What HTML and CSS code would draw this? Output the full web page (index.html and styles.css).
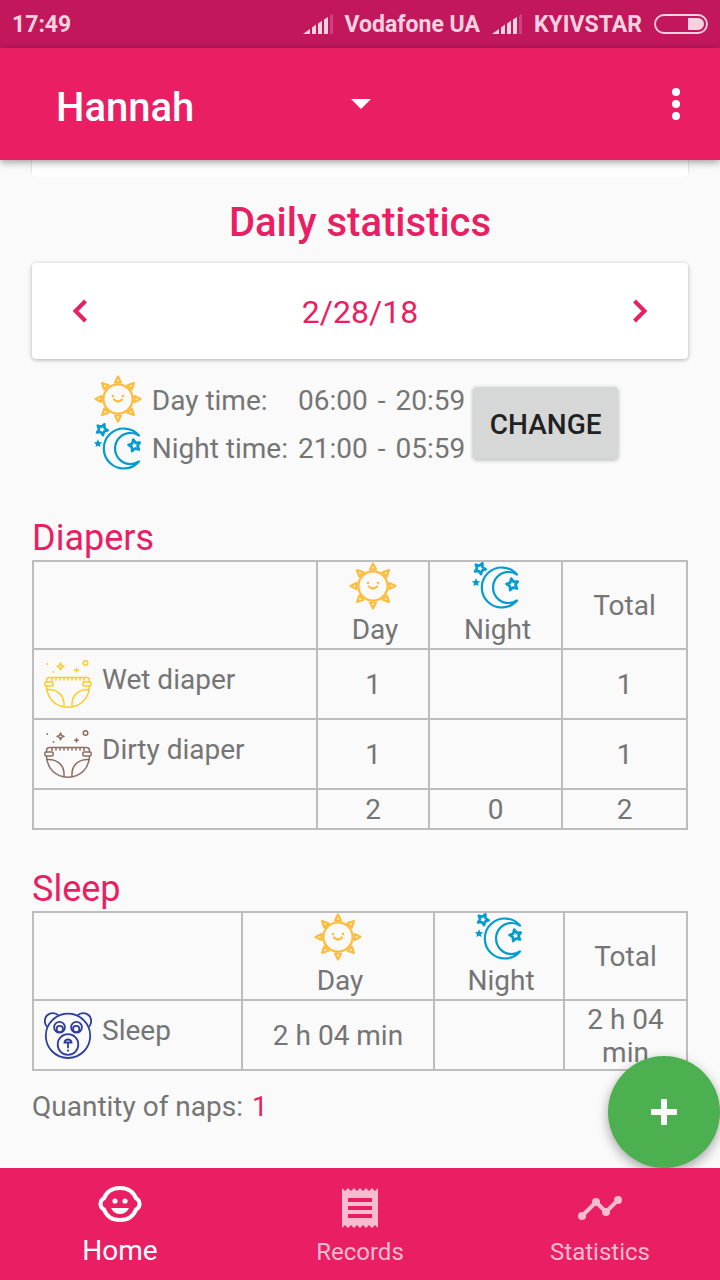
FILE: index.html
```html
<!DOCTYPE html>
<html lang="en">
<head>
<meta charset="utf-8">
<meta name="viewport" content="width=device-width, initial-scale=1">
<title>Daily statistics</title>
<link rel="stylesheet" href="styles.css">
</head>
<body>
<svg class="sprite" aria-hidden="true">
  <defs>
    <path id="ray" d="M24 1.5 L27 7.5 H21 Z"/>
    <path id="star" d="M0 -5 L1.5 -1.9 L4.8 -1.5 L2.4 .8 L2.9 4.1 L0 2.5 L-2.9 4.1 L-2.4 .8 L-4.8 -1.5 L-1.5 -1.9 Z"/>
    <symbol id="sun" viewBox="0 0 48 48">
      <g fill="none" stroke="#ffbb3b" stroke-width="2.2" stroke-linecap="round" stroke-linejoin="round">
        <circle cx="24" cy="24" r="14.6"/>
        <use href="#ray"/>
        <use href="#ray" transform="rotate(45 24 24)"/>
        <use href="#ray" transform="rotate(90 24 24)"/>
        <use href="#ray" transform="rotate(135 24 24)"/>
        <use href="#ray" transform="rotate(180 24 24)"/>
        <use href="#ray" transform="rotate(225 24 24)"/>
        <use href="#ray" transform="rotate(270 24 24)"/>
        <use href="#ray" transform="rotate(315 24 24)"/>
        <path d="M20 24.5 Q24 28.5 28 24.5"/>
      </g>
      <circle cx="19" cy="21" r="1.3" fill="#ffbb3b"/>
      <circle cx="29" cy="21" r="1.3" fill="#ffbb3b"/>
    </symbol>
    <symbol id="moon" viewBox="0 0 48 48">
      <g fill="none" stroke="#039bd0" stroke-width="2.2" stroke-linecap="round" stroke-linejoin="round">
        <path d="M45 12.500 A20 20 0 1 0 45 38.500 A15.500 15.500 0 1 1 45 12.500 Z"/>
        <use href="#star" transform="translate(8 6.500) rotate(25) scale(1.15)"/>
        <use href="#star" transform="translate(40.500 22.500) rotate(-12) scale(1.2)"/>
      </g>
      <use href="#star" transform="translate(4 20.500) scale(.85)" fill="#039bd0"/>
    </symbol>
    <symbol id="diaper" viewBox="0 0 48 48">
      <g fill="none" stroke="currentColor" stroke-width="1.5" stroke-linecap="round" stroke-linejoin="round">
        <path d="M2.500 22 V20.500 Q2.500 17.500 5.500 17.500 H42.500 Q45.500 17.500 45.500 20.500 V22"/>
        <path d="M8 18 V20.500 M12 18 V20 M16 18 V20 M20 18 V20 M24 18 V20 M28 18 V20 M32 18 V20 M36 18 V20 M40 18 V20.500"/>
        <rect x=".8" y="22" width="8.400" height="4" rx="1.500"/>
        <rect x="38.800" y="22" width="8.400" height="4" rx="1.500"/>
        <path d="M2.500 26 C3 38 11 47.200 24 47.200 S45 38 45.500 26"/>
        <path d="M3 29.500 C12 29 21 34 20 46.500 M45 29.500 C36 29 27 34 28 46.500"/>
        <path d="M16.500 3 L17.500 5.400 L20 6.400 L17.500 7.400 L16.500 9.800 L15.500 7.400 L13 6.400 L15.500 5.400 Z"/>
        <path d="M32.500 8.500 V12 M30.700 10.200 H34.300"/>
        <circle cx="41.500" cy="3" r="2.300"/>
      </g>
      <circle cx="3.300" cy="4" r=".9" fill="currentColor"/>
      <circle cx="9.500" cy="12" r=".9" fill="currentColor"/>
    </symbol>
    <symbol id="bear" viewBox="0 0 48 48">
      <g fill="none" stroke="#2f3f9f" stroke-width="1.8" stroke-linecap="round">
        <circle cx="24" cy="24.800" r="22.200"/>
        <path d="M3 15.500 A7.800 7.800 0 1 1 14.500 4.500 M45 15.500 A7.800 7.800 0 1 0 33.500 4.500"/>
        <circle cx="15.500" cy="16.300" r="5.400"/>
        <circle cx="32.500" cy="16.300" r="5.400"/>
        <circle cx="15.800" cy="18" r="3.200"/>
        <circle cx="32.200" cy="18" r="3.200"/>
        <circle cx="24" cy="33.500" r="10.300"/>
        <path d="M20.500 31.500 Q21 28.500 24 28.500 T27.500 31.500 Z M24 31.500 V36.500"/>
      </g>
      <circle cx="24" cy="39.600" r="1.100" fill="#2f3f9f"/>
    </symbol>
    <symbol id="signal" viewBox="0 0 30 20">
      <path fill="#f6d2e0" d="M0 20 L7 15 V20 Z M9 13.500 L13 10.500 V20 H9 Z M15 9.500 L19 6.800 V20 H15 Z M21 5.500 L25 3 V20 H21 Z"/>
      <path fill="#cf4080" d="M27 1.500 L30 0 V20 H27 Z"/>
    </symbol>
  </defs>
</svg>

<div class="status">
  <span class="clock">17:49</span>
  <svg class="signal"><use href="#signal"/></svg>
  <span class="carrier">Vodafone UA</span>
  <svg class="signal"><use href="#signal"/></svg>
  <span class="carrier">KYIVSTAR</span>
  <svg class="battery" viewBox="0 0 54 20">
    <rect x="1" y="1" width="52" height="18" rx="9" fill="none" stroke="#f6d2e0" stroke-width="1.800"/>
    <path fill="#f6d2e0" d="M34 4 H44 A6 6 0 0 1 44 16 H34 Z"/>
  </svg>
</div>

<header class="toolbar">
  <div class="picker">
    <select class="child" aria-label="Child"><option>Hannah</option></select>
    <svg class="caret" viewBox="0 0 20 10"><path d="M0 0 H20 L10 10 Z" fill="#fff"/></svg>
  </div>
  <button class="more" aria-label="More options">
    <svg width="8" height="32" viewBox="0 0 8 32" fill="#fff"><circle cx="4" cy="4" r="4"/><circle cx="4" cy="16" r="4"/><circle cx="4" cy="28" r="4"/></svg>
  </button>
</header>

<main class="content">
  <div class="card-end"></div>
  <h1 class="title">Daily statistics</h1>
  <div class="date-card">
    <button class="step" aria-label="Previous day"><svg width="16" height="24" viewBox="0 0 16 24"><path d="M13.500 2 L3.500 12 L13.500 22" fill="none" stroke="#e91e63" stroke-width="4"/></svg></button>
    <span class="date">2/28/18</span>
    <button class="step" aria-label="Next day"><svg width="16" height="24" viewBox="0 0 16 24"><path d="M2.500 2 L12.500 12 L2.500 22" fill="none" stroke="#e91e63" stroke-width="4"/></svg></button>
  </div>

  <div class="times">
    <div class="time-grid">
      <svg class="icon"><use href="#sun"/></svg><span>Day time:</span><span>06:00</span><span>-</span><span>20:59</span>
      <svg class="icon"><use href="#moon"/></svg><span>Night time:</span><span>21:00</span><span>-</span><span>05:59</span>
    </div>
    <button class="change">CHANGE</button>
  </div>

  <h2 class="section">Diapers</h2>
  <table class="grid diapers">
    <colgroup><col><col class="day"><col class="night"><col class="total"></colgroup>
    <thead>
      <tr>
        <td></td>
        <th scope="col"><svg class="icon"><use href="#sun"/></svg><span class="period">Day</span></th>
        <th scope="col"><svg class="icon"><use href="#moon"/></svg><span class="period">Night</span></th>
        <th scope="col" class="label">Total</th>
      </tr>
    </thead>
    <tbody>
      <tr class="entry"><th scope="row"><div class="kind"><svg class="icon wet"><use href="#diaper"/></svg>Wet diaper</div></th><td>1</td><td></td><td>1</td></tr>
      <tr class="entry"><th scope="row"><div class="kind"><svg class="icon dirty"><use href="#diaper"/></svg>Dirty diaper</div></th><td>1</td><td></td><td>1</td></tr>
      <tr class="sum"><td></td><td>2</td><td>0</td><td>2</td></tr>
    </tbody>
  </table>

  <h2 class="section second">Sleep</h2>
  <table class="grid sleep">
    <colgroup><col><col class="day"><col class="night"><col class="total"></colgroup>
    <thead>
      <tr>
        <td></td>
        <th scope="col"><svg class="icon"><use href="#sun"/></svg><span class="period">Day</span></th>
        <th scope="col"><svg class="icon"><use href="#moon"/></svg><span class="period">Night</span></th>
        <th scope="col" class="label">Total</th>
      </tr>
    </thead>
    <tbody>
      <tr class="entry"><th scope="row"><div class="kind"><svg class="icon"><use href="#bear"/></svg>Sleep</div></th><td>2 h 04 min</td><td></td><td class="narrow">2 h 04 min</td></tr>
    </tbody>
  </table>
  <p class="naps">Quantity of naps: <span class="count">1</span></p>

  <button class="fab" aria-label="Add record">
    <svg width="26" height="26" viewBox="0 0 26 26" fill="#fff"><rect x="10" width="6" height="26" rx="1"/><rect y="10" width="26" height="6" rx="1"/></svg>
  </button>
</main>

<nav class="tabs">
  <a class="tab active" href="#home" aria-current="page">
    <svg class="tab-icon" viewBox="0 0 48 48">
      <path d="M24 8 C32 8 37.500 12 40 18.300 A6.200 6.200 0 0 1 40 29.500 C37.500 36 32 40 24 40 S10.500 36 8 29.500 A6.200 6.200 0 0 1 8 18.300 C10.500 12 16 8 24 8 Z" fill="none" stroke="#fff" stroke-width="4"/>
      <circle cx="19" cy="21" r="2.600" fill="#fff"/><circle cx="29" cy="21" r="2.600" fill="#fff"/>
      <path d="M15 28 H33 Q30 34 24 34 T15 28 Z" fill="#fff"/>
    </svg>
    Home
  </a>
  <a class="tab" href="#records">
    <svg class="tab-icon" viewBox="0 0 48 48"><path fill="#f8bbd0" fill-rule="evenodd" d="M6 4 l3 3 3-3 3 3 3-3 3 3 3-3 3 3 3-3 3 3 3-3 3 3 3-3 V44 l-3-3 -3 3 -3-3 -3 3 -3-3 -3 3 -3-3 -3 3 -3-3 -3 3 -3-3 -3 3 Z M12 14 V18 H36 V14 Z M12 22 V26 H36 V22 Z M12 30 V34 H36 V30 Z"/></svg>
    Records
  </a>
  <a class="tab" href="#statistics">
    <svg class="tab-icon" viewBox="0 0 48 48" fill="#f8bbd0"><path d="M6 32 L20 18 L30 28 L42 16" fill="none" stroke="#f8bbd0" stroke-width="4"/><circle cx="6" cy="32" r="4"/><circle cx="20" cy="18" r="4"/><circle cx="30" cy="28" r="4"/><circle cx="42" cy="16" r="4"/></svg>
    Statistics
  </a>
</nav>
</body>
</html>
```
FILE: styles.css
```css
* { box-sizing: border-box; }

body {
  margin: 0;
  min-height: 100vh;
  display: flex;
  flex-direction: column;
  background: #fafafa;
  color: #757575;
  font-family: Roboto, "Liberation Sans", sans-serif;
  font-size: 28px;
  line-height: 32px;
}

button { padding: 0; border: 0; background: none; font: inherit; }

.sprite { position: absolute; width: 0; height: 0; }
.icon { display: block; width: 48px; height: 48px; flex: none; }

.status {
  display: flex;
  align-items: center;
  height: 48px;
  padding: 0 12px;
  background: #c2185b;
  color: #f6d2e0;
  font-size: 23px;
  font-weight: 700;
}
.clock, .carrier { padding-top: 2px; }
.clock { margin-right: auto; }
.signal { width: 30px; height: 20px; margin-right: 12px; }
.carrier { margin-right: 12px; }
.battery { width: 54px; height: 20px; }

.toolbar {
  position: relative;
  z-index: 1;
  display: flex;
  align-items: center;
  justify-content: space-between;
  height: 112px;
  padding: 0 24px 0 56px;
  background: #e91e63;
  box-shadow: 0 2px 8px rgba(0, 0, 0, .4);
}
.picker { display: grid; align-items: center; width: 315px; }
.child {
  grid-area: 1 / 1;
  width: 100%;
  height: 64px;
  padding: 6px 0 0;
  border: 0;
  appearance: none;
  background: none;
  color: #fff;
  font: 500 40px/60px Roboto, "Liberation Sans", sans-serif;
}
.caret { grid-area: 1 / 1; justify-self: end; width: 20px; height: 10px; pointer-events: none; }
.more { display: flex; justify-content: center; width: 40px; }

.content { position: relative; flex: 1; padding: 0 32px 40px; }

.card-end {
  height: 17px;
  border-radius: 0 0 4px 4px;
  background: #fff;
  box-shadow: 0 -2px 2px rgba(0, 0, 0, .3);
}
.title {
  margin: 22px 0 16px;
  color: #e91e63;
  font-size: 40px;
  font-weight: 500;
  line-height: 48px;
  text-align: center;
}
.date-card {
  display: flex;
  align-items: center;
  justify-content: space-between;
  height: 96px;
  padding: 0 24px;
  border-radius: 4px;
  background: #fff;
  box-shadow: 0 1px 4px rgba(0, 0, 0, .3);
  color: #e91e63;
  font-size: 32px;
}
.date { padding-top: 2px; }
.step { display: flex; align-items: center; justify-content: center; width: 48px; height: 48px; }

.times {
  display: flex;
  align-items: center;
  justify-content: center;
  gap: 8px;
  margin: 16px 8px 0 0;
}
.time-grid {
  display: grid;
  grid-template-columns: 48px repeat(4, auto);
  align-items: center;
  column-gap: 10px;
}
.time-grid span { padding-top: 4px; }
.change {
  width: 145px;
  height: 72px;
  padding-top: 3px;
  border-radius: 4px;
  background: #d6d7d7;
  box-shadow: 0 1px 4px rgba(0, 0, 0, .3);
  color: #212121;
  font-weight: 500;
}

.section {
  margin: 46px 0 1px;
  color: #e91e63;
  font-size: 36px;
  font-weight: 400;
  line-height: 42px;
}
.section.second { margin-top: 38px; }
.grid {
  width: 100%;
  border-collapse: collapse;
  table-layout: fixed;
}
.grid th, .grid td {
  padding: 0;
  border: 2px solid #bdbdbd;
  font-weight: 400;
  text-align: center;
}
.grid td, .grid .label { padding-top: 2px; }
.grid thead tr { height: 88px; }
.grid thead .icon { margin: 0 auto; }
.period { display: block; height: 38px; padding: 4px 0 0 4px; }
.entry { height: 70px; }
.sum { height: 40px; }
.kind { display: flex; gap: 10px; padding-left: 10px; line-height: 40px; }
.wet { color: #ffca28; }
.dirty { color: #8d6e63; }

.diapers .day { width: 112px; }
.diapers .night { width: 133px; }
.diapers .total { width: 125px; }
.sleep .day { width: 192px; }
.sleep .night { width: 130px; }
.sleep .total { width: 123px; }
.grid .narrow { padding: 2px 16px 0; line-height: 33px; }

.naps { margin: 20px 0 0; }
.count { margin-left: 2px; color: #e91e63; }

.fab {
  position: absolute;
  right: 0;
  bottom: 0;
  display: flex;
  align-items: center;
  justify-content: center;
  width: 112px;
  height: 112px;
  border-radius: 50%;
  background: #4caf50;
  box-shadow: 0 4px 12px rgba(0, 0, 0, .35);
}

.tabs {
  position: relative;
  display: grid;
  grid-template-columns: repeat(3, 1fr);
  height: 112px;
  background: #e91e63;
}
.tab {
  display: flex;
  flex-direction: column;
  align-items: center;
  gap: 4px;
  padding-top: 16px;
  color: #f8bbd0;
  font-size: 24px;
  text-decoration: none;
}
.tab.active { padding-top: 12px; gap: 7px; color: #fff; font-size: 28px; }
.tab-icon { width: 48px; height: 48px; }
```
